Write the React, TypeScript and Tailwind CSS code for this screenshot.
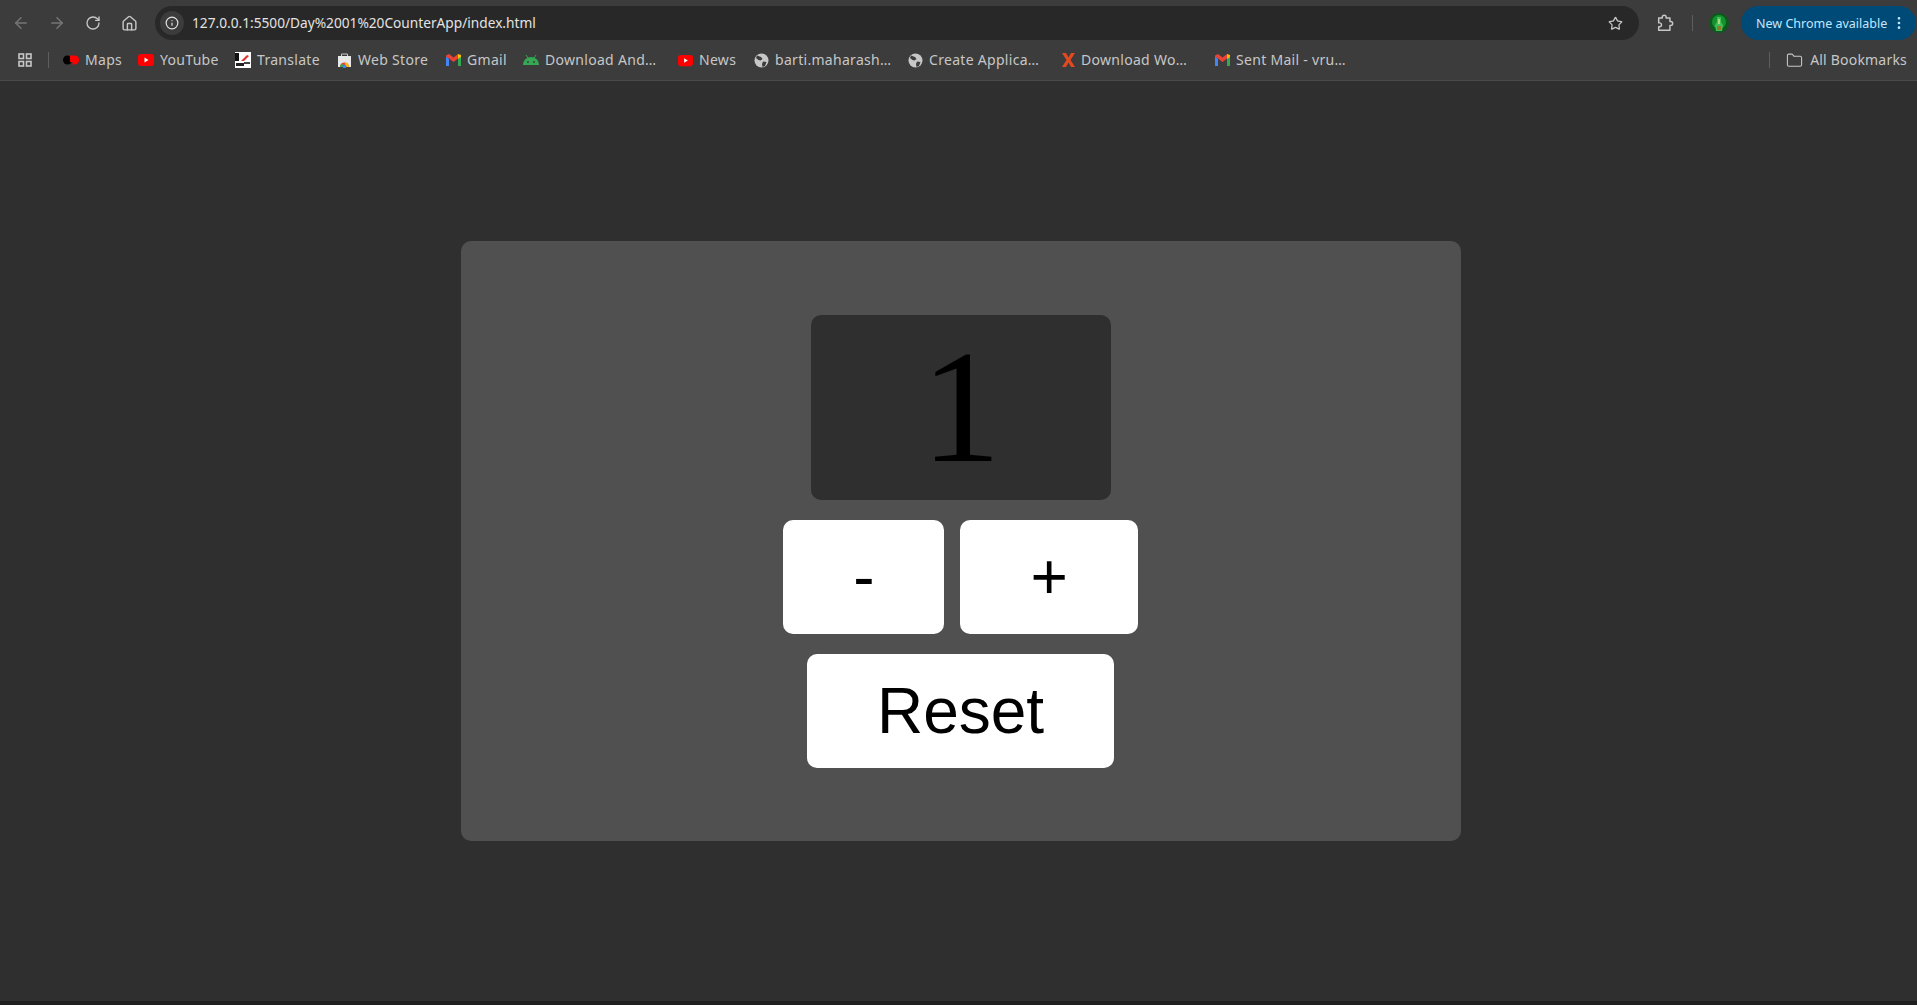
import React, { useState } from 'react';
import { ArrowLeft, ArrowRight, RotateCw, House, Info, Star, Folder, EllipsisVertical } from 'lucide-react';

const AppsIcon = () => (
  <svg width="14" height="14" viewBox="0 0 14 14" fill="none" stroke="#c7c7c7" strokeWidth="1.6">
    <rect x="1" y="1" width="4.5" height="4.5" />
    <rect x="8.5" y="1" width="4.5" height="4.5" />
    <rect x="1" y="8.5" width="4.5" height="4.5" />
    <rect x="8.5" y="8.5" width="4.5" height="4.5" />
  </svg>
);

const MapsIcon = () => (
  <svg width="16" height="16" viewBox="0 0 16 16">
    <circle cx="4.5" cy="8" r="4.500" fill="#000" />
    <path d="M7 3.500h5a4.500 4.500 0 0 1 4 4.500 4.500 4.500 0 0 1-4 4.500H9.500V10H7z" fill="#f00" />
  </svg>
);

const YoutubeIcon = ({ size = 16 }: { size?: number }) => (
  <svg width={size} height={size} viewBox="0 0 16 16">
    <rect x="0" y="2" width="16" height="12" rx="3" fill="#f00" />
    <path d="M6.500 5.500 10.500 8 6.500 10.500z" fill="#fff" />
  </svg>
);

const TranslateIcon = () => (
  <svg width="16" height="16" viewBox="0 0 16 16">
    <rect width="16" height="16" fill="#fff" />
    <rect x="0" y="1" width="4" height="8" fill="#111" />
    <rect x="1" y="11" width="8" height="3" fill="#222" />
    <path d="M6 9 12 3l2 1-5 5z" fill="#d33" />
    <rect x="9" y="10" width="6" height="2" fill="#444" />
  </svg>
);

const WebStoreIcon = () => (
  <svg width="15" height="16" viewBox="0 0 15 16">
    <path d="M1 4h13v11H1z" fill="#e8e8e8" />
    <path d="M4.500 4V2h6v2" fill="none" stroke="#ccc" strokeWidth="1" />
    <path d="M3 15a4.500 4.500 0 0 1 9 0z" fill="#ea4335" />
    <path d="M7.500 10.500a4.500 4.500 0 0 1 4.500 4.500H9.500z" fill="#fbbc04" />
    <path d="M3 15a4.500 4.500 0 0 1 2-3.700L7 15z" fill="#34a853" />
    <circle cx="7.500" cy="14.500" r="1.800" fill="#4285f4" />
  </svg>
);

const GmailIcon = () => (
  <svg width="15" height="12" viewBox="0 0 15 12">
    <path d="M0 2v10h3V5z" fill="#4285f4" />
    <path d="M15 2v10h-3V5z" fill="#34a853" />
    <path d="M0 1.500 3 0l4.500 3.500L12 0v4.500L7.500 8 3 4.500 0 2.500z" fill="#ea4335" />
    <path d="M12 0l3 1v2l-3 2z" fill="#fbbc04" />
  </svg>
);

const AndroidIcon = () => (
  <svg width="16" height="12" viewBox="0 0 16 12">
    <path d="M0 11a8 8 0 0 1 16 0z" fill="#34a853" />
    <path d="M3 1l2 3M13 1l-2 3" stroke="#34a853" strokeWidth="1" />
    <circle cx="5" cy="8" r="1" fill="#3c3c3c" />
    <circle cx="11" cy="8" r="1" fill="#3c3c3c" />
  </svg>
);

const GlobeIcon = () => (
  <svg width="15" height="15" viewBox="0 0 15 15">
    <circle cx="7.500" cy="7.500" r="7" fill="#c7c7c7" />
    <path d="M3 2.500 7 4l1.500 2-2 1.500L4.500 7 2 5zM9 8.500l3.500.5L11 13l-2.500 1L8 11z" fill="#3c3c3c" />
  </svg>
);

const XIcon = () => (
  <svg width="13" height="14" viewBox="0 0 13 14">
    <path d="M0 0h4l2.500 4.500L9 0h4L8.500 7 13 14H9L6.500 9.500 4 14H0l4.500-7z" fill="#e2491f" />
  </svg>
);

const PuzzleIcon = () => (
  <svg width="18" height="18" viewBox="0 0 16 16" fill="none" stroke="#c7c7c7" strokeWidth="1.300" strokeLinejoin="round">
    <path d="M1.500 3.500h3.200V2.800a1.700 1.700 0 0 1 3.400 0v.7h3.400v3.200h.7a1.700 1.700 0 0 1 0 3.400h-.7v4.400H1.500v-3.200h.8a1.700 1.700 0 0 0 0-3.400h-.8z" />
  </svg>
);

const Avatar = () => (
  <svg width="20" height="20" viewBox="0 0 20 20">
    <circle cx="10" cy="10" r="10" fill="#0b5a1c" />
    <circle cx="10" cy="9" r="7" fill="#16912f" />
    <path d="M8 4h4v5l2 3-1 6H7l-1-6 2-3z" fill="#3fbf5a" />
    <rect x="9" y="6" width="2" height="5" fill="#a8d878" />
    <rect x="8" y="13" width="4" height="4" fill="#8a7a2a" />
  </svg>
);

const bookmarks = [
  { label: 'Maps', icon: <MapsIcon />, width: 'w-[75px]' },
  { label: 'YouTube', icon: <YoutubeIcon />, width: 'w-[97px]' },
  { label: 'Translate', icon: <TranslateIcon />, width: 'w-[102px]' },
  { label: 'Web Store', icon: <WebStoreIcon />, width: 'w-[109px]' },
  { label: 'Gmail', icon: <GmailIcon />, width: 'w-[77px]' },
  { label: 'Download And…', icon: <AndroidIcon />, width: 'w-[155px]' },
  { label: 'News', icon: <YoutubeIcon size={15} />, width: 'w-[76px]' },
  { label: 'barti.maharash…', icon: <GlobeIcon />, width: 'w-[154px]' },
  { label: 'Create Applica…', icon: <GlobeIcon />, width: 'w-[154px]' },
  { label: 'Download Wo…', icon: <XIcon />, width: 'w-[153px]' },
  { label: 'Sent Mail - vru…', icon: <GmailIcon />, width: 'w-[150px]' },
];

export default function App() {
  const [count, setCount] = useState(1);

  return (
    <div className="h-[1005px] overflow-hidden flex flex-col bg-[#2f2f2f] font-['Liberation_Sans',sans-serif]">
      <div className="h-[81px] shrink-0 bg-[#3c3c3c] border-b border-[#4a4a4a] font-['Noto_Sans',sans-serif]">
        <div className="h-[40px] pt-[6px] flex items-center">
          <div className="w-[155px] flex items-center shrink-0 pl-[3px]">
            <div className="w-[36px] flex justify-center"><ArrowLeft size={18} className="text-[#757575]" /></div>
            <div className="w-[36px] flex justify-center"><ArrowRight size={18} className="text-[#757575]" /></div>
            <div className="w-[36px] flex justify-center"><RotateCw size={16} className="text-[#c7c7c7]" /></div>
            <div className="w-[36px] flex justify-center"><House size={17} className="text-[#c7c7c7]" /></div>
          </div>
          <div className="w-[1484px] h-[34px] shrink-0 rounded-full bg-[#282828] flex items-center pl-[5px] pr-[16px]">
            <div className="w-[24px] h-[24px] rounded-full bg-[#3c3c3c] flex items-center justify-center">
              <Info size={14} className="text-[#e3e3e3]" />
            </div>
            <span className="ml-[8px] pt-px text-[13.7px] text-[#e3e3e3]">127.0.0.1:5500/Day%2001%20CounterApp/index.html</span>
            <Star size={15} className="ml-auto text-[#c7c7c7]" />
          </div>
          <div className="w-[102px] shrink-0 flex items-center pl-[18px]">
            <PuzzleIcon />
            <div className="ml-[17px] w-px h-[16px] bg-[#5e5e5e]" />
            <div className="ml-[16px]"><Avatar /></div>
          </div>
          <div className="w-[175px] h-[34px] shrink-0 rounded-full bg-[#004a77] flex items-center pl-[15px] text-[12.5px] text-[#c2e7ff]">
            <span className="w-[135px] pt-[2px]">New Chrome available</span>
            <EllipsisVertical size={16} className="text-[#c2e7ff]" />
          </div>
        </div>
        <div className="h-[40px] flex items-center pl-[18px] text-[14px] text-[#c7c7c7]">
          <AppsIcon />
          <div className="ml-[16px] mr-[14px] w-px h-[16px] bg-[#5e5e5e]" />
          {bookmarks.map((b) => (
            <div key={b.label} className={`${b.width} shrink-0 flex items-center gap-[6px] whitespace-nowrap tracking-[0.3px]`}>
              {b.icon}
              <span className="pb-[2px]">{b.label}</span>
            </div>
          ))}
          <div className="ml-auto w-px h-[16px] bg-[#5e5e5e]" />
          <div className="ml-[16px] mr-[10px] flex items-center gap-[7px] tracking-[0.2px]">
            <Folder size={17} strokeWidth={1.5} />
            <span className="pb-[2px]">All Bookmarks</span>
          </div>
        </div>
      </div>

      <main className="flex-1 flex items-center pl-[461px]">
        <div className="w-[1000px] h-[600px] rounded-[10px] bg-[#505050] flex flex-col items-center justify-center gap-[20px]">
          <div className="w-[300px] h-[185px] rounded-[10px] bg-[#2f2f2f] flex items-center justify-center font-['Liberation_Serif',serif] text-[160px] leading-none text-black">
            {count}
          </div>
          <div className="flex gap-[16px] mr-px">
            <button onClick={() => setCount(count - 1)} className="px-[70px] h-[114px] rounded-[10px] bg-white text-[64px] text-black">-</button>
            <button onClick={() => setCount(count + 1)} className="px-[70px] h-[114px] rounded-[10px] bg-white text-[64px] text-black">+</button>
          </div>
          <button onClick={() => setCount(0)} className="px-[70px] h-[114px] mr-px rounded-[10px] bg-white text-[64px] text-black">Reset</button>
        </div>
      </main>

      <div className="h-[4px] shrink-0 bg-[#1f1f1f]" />
    </div>
  );
}
